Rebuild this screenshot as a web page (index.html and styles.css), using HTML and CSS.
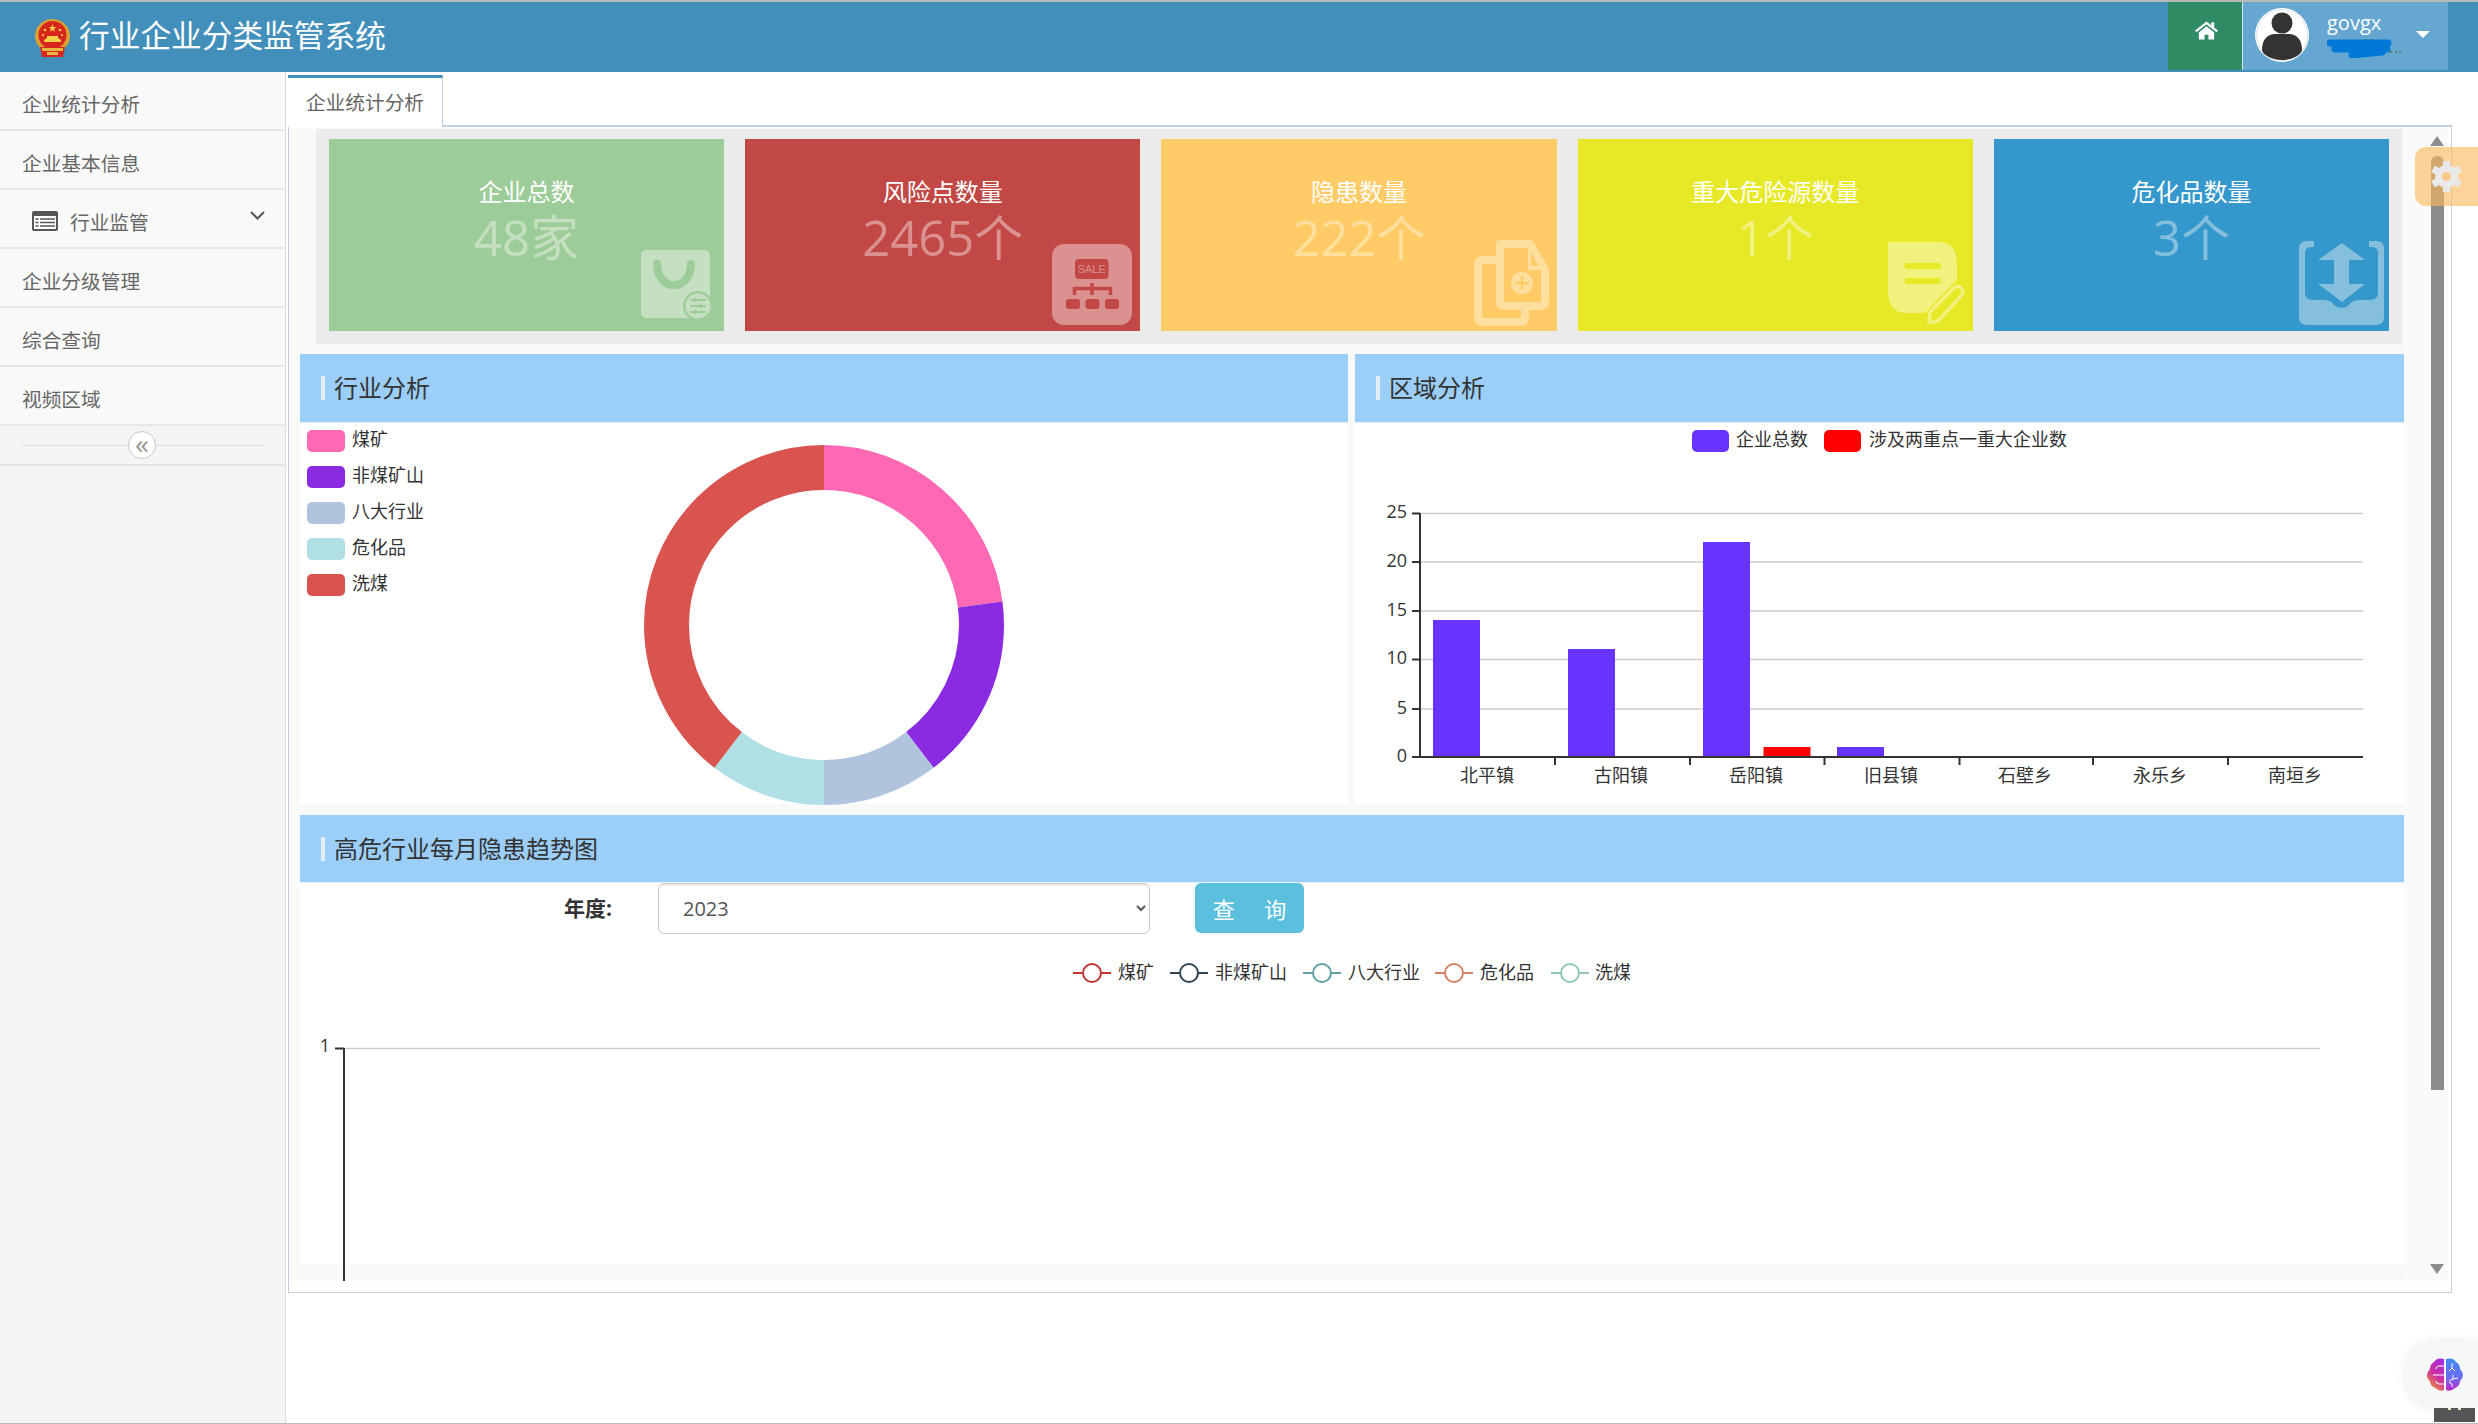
FILE: index.html
```html
<!DOCTYPE html>
<html lang="zh-CN">
<head>
<meta charset="utf-8">
<title>行业企业分类监管系统</title>
<link rel="stylesheet" href="styles.css">
</head>
<body>
<div class="shell">
  <header class="topbar">
    <svg class="emblem" viewBox="0 0 35 38">
      <ellipse cx="17.5" cy="17" rx="17.5" ry="17" fill="#d9a233"/>
      <ellipse cx="17.5" cy="16" rx="14" ry="14" fill="#d8261c"/>
      <path d="M17.5 5l1 3h3l-2.500 1.800 1 3-2.500-1.800-2.500 1.800 1-3L13.500 8h3z" fill="#f6d24a"/>
      <circle cx="10" cy="11" r="1.300" fill="#f6d24a"/><circle cx="25" cy="11" r="1.300" fill="#f6d24a"/>
      <circle cx="8" cy="16" r="1.100" fill="#f6d24a"/><circle cx="27" cy="16" r="1.100" fill="#f6d24a"/>
      <path d="M9 23h17v-2l-3-2v-2H12v2l-3 2z" fill="#f6d24a"/>
      <path d="M5 28h25l-2 10H7z" fill="#d8261c"/>
      <path d="M7 29h21v3H7zM12 33h11v3H12z" fill="#e8b93c"/>
    </svg>
    <h1 class="app-title">行业企业分类监管系统</h1>
    <div class="topbar-spacer"></div>
    <div class="home-btn">
      <svg class="home-icon" viewBox="0 0 24 19">
        <path d="M12 0L0 9.500l1.600 1.800L12 3l10.400 8.300L24 9.500l-4-3.200V1h-3v2.900z" fill="#fff"/>
        <path d="M4 11.500L12 5l8 6.500V19h-6v-5h-4v5H4z" fill="#fff"/>
      </svg>
    </div>
    <div class="user-box">
      <svg class="avatar" viewBox="0 0 54 54">
        <circle cx="27" cy="27" r="27" fill="#fff"/>
        <circle cx="27" cy="27" r="25.500" fill="none" stroke="#dfe3ea"/>
        <circle cx="27" cy="15" r="10.500" fill="#333"/>
        <path d="M7 42c0-11 6-16 13-16h14c7 0 13 5 13 16 0 4-9 10-20 10S7 46 7 42z" fill="#333"/>
      </svg>
      <div class="user-text">
        <div class="user-name">govgx</div>
        <div class="user-org">
          <svg class="scribble" viewBox="0 0 74 20">
            <path d="M3 3h14v8h20V2h10v5h17" fill="none" stroke="#5f7048" stroke-width="1"/>
            <circle cx="69" cy="14" r="1" fill="#5f7048"/><circle cx="64" cy="14" r="1" fill="#5f7048"/><circle cx="73" cy="14" r="1" fill="#5f7048"/>
            <path d="M3 5h58M8 11h52M25 17l30-3" fill="none" stroke="#0078d7" stroke-width="7" stroke-linecap="round"/>
          </svg>
        </div>
      </div>
      <span class="caret"></span>
    </div>
  </header>

  <div class="body-row">
    <nav class="sidebar">
      <a class="nav-item">企业统计分析</a>
      <a class="nav-item">企业基本信息</a>
      <a class="nav-item nav-group">
        <svg class="nav-icon" viewBox="0 0 26 20">
          <rect width="26" height="20" rx="2" fill="#555"/>
          <rect x="2" y="5" width="22" height="13" fill="#fff"/>
          <path d="M3.500 8h3M8 8h15M3.500 11.500h3M8 11.500h15M3.500 15h3M8 15h15" stroke="#555" stroke-width="1.600"/>
        </svg>
        <span>行业监管</span>
        <svg class="nav-chevron" viewBox="0 0 15 9"><path d="M1 1l6.500 6.500L14 1" fill="none" stroke="#555" stroke-width="2"/></svg>
      </a>
      <a class="nav-item">企业分级管理</a>
      <a class="nav-item">综合查询</a>
      <a class="nav-item">视频区域</a>
      <div class="collapse-row">
        <span class="collapse-line"></span>
        <span class="collapse-btn">«</span>
      </div>
    </nav>

    <main class="main">
      <div class="tabs"><div class="tab">企业统计分析</div></div>
      <div class="panel">
        <div class="panel-inner">
          <div class="content">
            <section class="stats">
              <div class="card card-green">
                <div class="card-title">企业总数</div>
                <div class="card-value">48家</div>
                <svg class="card-icon icon-bag" viewBox="0 0 72 71">
                  <rect width="69" height="68" rx="5" class="fg"/>
                  <path d="M16 14c0 28 34 28 34 0" fill="none" stroke-width="8" stroke-linecap="round" class="bg-stroke"/>
                  <circle cx="57" cy="56" r="15" class="bg"/>
                  <circle cx="57" cy="56" r="12.500" class="fg"/>
                  <path d="M49 50h16M49 56h16M49 62h16M54 48v4M60 54v4M54 60v4" stroke-width="2" class="bg-stroke"/>
                </svg>
              </div>
              <div class="card card-red">
                <div class="card-title">风险点数量</div>
                <div class="card-value">2465个</div>
                <svg class="card-icon icon-sale" viewBox="0 0 80 81">
                  <rect width="80" height="81" rx="12" class="fg"/>
                  <rect x="23" y="15" width="33.500" height="20" rx="4" class="bg"/>
                  <text x="39.700" y="29" class="sale-text">SALE</text>
                  <path d="M40 39v12M22.500 51v-6.500h36V51" fill="none" stroke-width="3.500" class="bg-stroke"/>
                  <rect x="14" y="55" width="14" height="10" rx="3" class="bg"/>
                  <rect x="33.500" y="55" width="14" height="10" rx="3" class="bg"/>
                  <rect x="53" y="55" width="14" height="10" rx="3" class="bg"/>
                </svg>
              </div>
              <div class="card card-amber">
                <div class="card-title">隐患数量</div>
                <div class="card-value">222个</div>
                <svg class="card-icon icon-file" viewBox="0 0 75 86">
                  <path d="M22 20H9q-5 0-5 5v52q0 5 5 5h37q5 0 5-5v-8" fill="none" stroke-width="8" class="fg-stroke"/>
                  <path d="M26 4h30l15 26v32q0 4-4 4H30q-4 0-4-4z" stroke-width="8" stroke-linejoin="round" class="bg fg-stroke"/>
                  <path d="M54 4l17 26H54z" class="fg"/>
                  <path d="M57 12l7 14h-7z" class="bg"/>
                  <circle cx="48" cy="43" r="11" class="fg"/>
                  <path d="M41 43h14M48 36v14" stroke-width="2.500" class="bg-stroke"/>
                </svg>
              </div>
              <div class="card card-lime">
                <div class="card-title">重大危险源数量</div>
                <div class="card-value">1个</div>
                <svg class="card-icon icon-note" viewBox="0 0 78 82">
                  <path d="M0 0h50q19 0 19 22v16L37 71H18Q0 71 0 48z" class="fg"/>
                  <rect x="16.500" y="21" width="36.500" height="6" rx="3" class="bg"/>
                  <rect x="16.500" y="36" width="36.500" height="6" rx="3" class="bg"/>
                  <path d="M41 81l1-11 25-25q4-2 7 2 2 4-1 7L50 79z" fill="none" stroke-width="3.500" class="fg-stroke"/>
                </svg>
              </div>
              <div class="card card-blue">
                <div class="card-title">危化品数量</div>
                <div class="card-value">3个</div>
                <svg class="card-icon icon-tray" viewBox="0 0 85 84">
                  <path d="M8 0h7v6h-3q-6 0-6 6v40q0 7 8 7h11q7 0 10 5 8 6 15 0 3-5 10-5h11q8 0 8-7V12q0-6-6-6h-3V0h7q8 0 8 8v68q0 8-8 8H8q-8 0-8-8V8q0-8 8-8z" class="fg"/>
                  <path d="M43 2l23 17H50v24h16L43 61 19 43h16V19H19z" class="fg"/>
                </svg>
              </div>
            </section>

            <div class="analysis-row">
              <section class="block block-left">
                <h2 class="block-head"><span class="block-bar"></span>行业分析</h2>
                <svg class="chart chart-left" viewBox="300 423 1048 381">
                  <rect x="307" y="430" width="38" height="22" rx="5" fill="#ff69b4"/><text x="352" y="446" class="t">煤矿</text>
                  <rect x="307" y="466" width="38" height="22" rx="5" fill="#8a2be2"/><text x="352" y="482" class="t">非煤矿山</text>
                  <rect x="307" y="502" width="38" height="22" rx="5" fill="#b0c4de"/><text x="352" y="518" class="t">八大行业</text>
                  <rect x="307" y="538" width="38" height="22" rx="5" fill="#b0e0e6"/><text x="352" y="554" class="t">危化品</text>
                  <rect x="307" y="574" width="38" height="22" rx="5" fill="#d9534f"/><text x="352" y="590" class="t">洗煤</text>
                  <g transform="rotate(-90 824 625)" fill="none" stroke-width="45">
                    <circle cx="824" cy="625" r="157.500" pathLength="360" stroke="#ff69b4" stroke-dasharray="82.500 277.500" stroke-dashoffset="0"/>
                    <circle cx="824" cy="625" r="157.500" pathLength="360" stroke="#8a2be2" stroke-dasharray="60 300" stroke-dashoffset="-82.500"/>
                    <circle cx="824" cy="625" r="157.500" pathLength="360" stroke="#b0c4de" stroke-dasharray="37.500 322.500" stroke-dashoffset="-142.500"/>
                    <circle cx="824" cy="625" r="157.500" pathLength="360" stroke="#b0e0e6" stroke-dasharray="37.500 322.500" stroke-dashoffset="-180"/>
                    <circle cx="824" cy="625" r="157.500" pathLength="360" stroke="#d9534f" stroke-dasharray="142.500 217.500" stroke-dashoffset="-217.500"/>
                  </g>
                </svg>
              </section>
              <section class="block block-right">
                <h2 class="block-head"><span class="block-bar"></span>区域分析</h2>
                <svg class="chart chart-right" viewBox="1355 423 1049 381">
                  <rect x="1692" y="430" width="37" height="22" rx="5" fill="#6633ff"/><text x="1736" y="446" class="t">企业总数</text>
                  <rect x="1824" y="430" width="37" height="22" rx="5" fill="#ff0000"/><text x="1869" y="446" class="t">涉及两重点一重大企业数</text>
                  <path class="grid" d="M1420 513.500H2363M1420 562H2363M1420 611H2363M1420 659.500H2363M1420 709H2363"/>
                  <g fill="#6633ff">
                    <rect x="1433" y="620" width="47" height="137"/>
                    <rect x="1568" y="649" width="47" height="108"/>
                    <rect x="1703" y="542" width="47" height="215"/>
                    <rect x="1837" y="747" width="47" height="10"/>
                  </g>
                  <rect x="1763.500" y="747" width="47" height="10" fill="#ff0000"/>
                  <path class="axis" d="M1420 513V757M1412 513.500h8M1412 562h8M1412 611h8M1412 659.500h8M1412 709h8M1412 757H2363M1555 757v8M1690 757v8M1824.500 757v8M1959.500 757v8M2093 757v8M2228 757v8"/>
                  <g class="t t-end">
                    <text x="1407" y="518">25</text><text x="1407" y="567">20</text><text x="1407" y="616">15</text><text x="1407" y="664">10</text><text x="1407" y="714">5</text><text x="1407" y="762">0</text>
                  </g>
                  <g class="t t-mid">
                    <text x="1487" y="782">北平镇</text><text x="1621" y="782">古阳镇</text><text x="1756" y="782">岳阳镇</text><text x="1891" y="782">旧县镇</text><text x="2025" y="782">石壁乡</text><text x="2160" y="782">永乐乡</text><text x="2295" y="782">南垣乡</text>
                  </g>
                </svg>
              </section>
            </div>

            <section class="block block-wide">
              <h2 class="block-head"><span class="block-bar"></span>高危行业每月隐患趋势图</h2>
              <form class="query">
                <label class="query-label">年度:</label>
                <select class="query-select"><option>2023</option></select>
                <button type="button" class="query-btn">查&nbsp;&nbsp;询</button>
              </form>
              <svg class="chart chart-trend" viewBox="300 934 2104 331">
                <g fill="#fff" stroke-width="2">
                  <path d="M1073 972h38" stroke="#c23531"/><circle cx="1092" cy="972" r="9" stroke="#c23531"/>
                  <path d="M1170 972h38" stroke="#2f4554"/><circle cx="1189" cy="972" r="9" stroke="#2f4554"/>
                  <path d="M1303 972h38" stroke="#61a0a8"/><circle cx="1322" cy="972" r="9" stroke="#61a0a8"/>
                  <path d="M1435 972h38" stroke="#d48265"/><circle cx="1454" cy="972" r="9" stroke="#d48265"/>
                  <path d="M1551 972h38" stroke="#91c7ae"/><circle cx="1570" cy="972" r="9" stroke="#91c7ae"/>
                </g>
                <g class="t">
                  <text x="1118" y="978">煤矿</text><text x="1215" y="978">非煤矿山</text><text x="1348" y="978">八大行业</text><text x="1480" y="978">危化品</text><text x="1595" y="978">洗煤</text>
                </g>
                <path class="grid" d="M344 1047.500H2320"/>
                <path class="axis" d="M344 1047V1281M335 1047.500h9"/>
                <text x="330" y="1051" class="t t-end">1</text>
              </svg>
            </section>
          </div>
          <div class="scrollbar">
            <span class="arrow-up"></span>
            <span class="thumb"></span>
            <span class="arrow-down"></span>
          </div>
        </div>
      </div>
    </main>
  </div>
</div>

<aside class="gear-tab">
  <svg class="gear" viewBox="0 0 36 36">
    <g stroke="#e9e9e9" stroke-width="8">
      <path d="M18 1v34M3.300 9.500l29.400 17M3.300 26.500l29.400-17"/>
    </g>
    <circle cx="18" cy="18" r="12.500" fill="#e9e9e9"/>
    <circle cx="18" cy="18" r="5" fill="#f9c98a"/>
  </svg>
</aside>
<aside class="brain-tab">
  <svg class="brain" viewBox="0 0 36 33">
    <defs>
      <linearGradient id="lobeL" x1="0.800" y1="0" x2="0.300" y2="1"><stop offset="0" stop-color="#a52be0"/><stop offset="0.550" stop-color="#d0329e"/><stop offset="1" stop-color="#f0962c"/></linearGradient>
      <linearGradient id="lobeR" x1="0.500" y1="0" x2="0.500" y2="1"><stop offset="0" stop-color="#3f8cf5"/><stop offset="0.600" stop-color="#6a6cf0"/><stop offset="1" stop-color="#c026c8"/></linearGradient>
    </defs>
    <path d="M17 1Q10-1 7 4 3 6 3 11 0 14 0 17q0 4 3 6 0 5 5 7 5 4 9 2z" fill="url(#lobeL)"/>
    <path d="M19 1q7-2 10 3 4 2 4 7 3 3 3 6t-3 6q0 5-5 7-5 4-9 2z" fill="url(#lobeR)"/>
    <path d="M17 8h-5q-3 0-3 3M17 17H6M17 26h-5q-3 0-3-3M25 5v5l-3 3M25 10l3 3M26 17v4l-4 2M26 21l5-1M25 26l-3-2M25 26v3" fill="none" stroke="#fff" stroke-width="1"/>
  </svg>
</aside>
<div class="corner-chip"><span class="chip-dot"></span><span class="chip-dot"></span></div>
</body>
</html>
```

FILE: styles.css
```css
* { box-sizing: border-box; }
html, body { margin: 0; height: 100%; }
body {
  width: 2478px;
  height: 1424px;
  overflow: hidden;
  position: relative;
  background: #fff;
  font-family: "Open Sans", "Noto Sans CJK SC", sans-serif;
  color: #333;
}
.shell {
  height: 1424px;
  display: flex;
  flex-direction: column;
  border-top: 2px solid #b8b8b8;
  border-bottom: 1px solid #bdbdbd;
}

/* top bar */
.topbar {
  height: 70px;
  flex: none;
  display: flex;
  align-items: flex-start;
  background: #428fbb;
  padding-left: 35px;
  padding-right: 30px;
}
.emblem { width: 35px; height: 38px; margin-top: 17px; flex: none; }
.app-title {
  margin: 13px 0 0 9px;
  font-size: 30.700px;
  line-height: 40px;
  font-weight: 400;
  color: #fff;
  white-space: nowrap;
}
.topbar-spacer { flex: 1; }
.home-btn {
  width: 75px;
  height: 68px;
  background: #2e8b63;
  border-right: 1px solid #d5e6ef;
  display: flex;
  justify-content: center;
  padding-top: 19px;
  flex: none;
}
.home-icon { width: 23px; height: 19px; margin-left: 2px; }
.user-box {
  width: 205px;
  height: 68px;
  background: #65a7d1;
  display: flex;
  align-items: flex-start;
  padding-left: 12px;
  flex: none;
}
.avatar { width: 54px; height: 54px; margin-top: 6px; flex: none; }
.user-text { margin-left: 18px; width: 77px; flex: none; }
.user-name { font-size: 20px; line-height: 26px; margin-top: 8px; color: #fff; }
.user-org { height: 22px; margin-top: 2px; }
.scribble { width: 74px; height: 20px; display: block; }
.caret {
  width: 0;
  height: 0;
  margin-left: 12px;
  margin-top: 29px;
  border-left: 7px solid transparent;
  border-right: 7px solid transparent;
  border-top: 7px solid #fff;
}

.body-row { flex: 1; display: flex; min-height: 0; }

/* sidebar */
.sidebar {
  width: 286px;
  flex: none;
  background: #f4f4f4;
  border-right: 1px solid #dcdcdc;
  display: flex;
  flex-direction: column;
}
.nav-item {
  height: 59px;
  flex: none;
  display: flex;
  align-items: center;
  padding-left: 22px;
  padding-top: 5px;
  font-size: 19.700px;
  color: #666;
  background: #f9f9f9;
  border-bottom: 2px solid #e8e8e8;
  white-space: nowrap;
}
.nav-group { padding-left: 32px; }
.nav-icon { width: 26px; height: 20px; margin-right: 12px; flex: none; }
.nav-chevron { width: 15px; height: 9px; margin-left: 101px; margin-top: -11px; }
.collapse-row {
  height: 40px;
  flex: none;
  position: relative;
  display: flex;
  align-items: center;
  justify-content: center;
  padding-left: 0;
  border-bottom: 2px solid #e2e2e2;
}
.collapse-line { position: absolute; left: 22px; right: 22px; top: 19px; height: 1px; background: #dcdcdc; }
.collapse-btn {
  position: relative;
  width: 28px;
  height: 28px;
  margin-left: -1px;
  border-radius: 50%;
  border: 1px solid #c8c8c8;
  background: #fff;
  color: #999;
  font-size: 28px;
  line-height: 22px;
  text-align: center;
}

/* main */
.main { flex: 1; min-width: 0; padding: 3px 26px 0 2px; display: flex; flex-direction: column; }
.tabs { height: 50px; flex: none; display: flex; }
.tab {
  position: relative;
  z-index: 1;
  width: 155px;
  height: 52px;
  background: #fff;
  border-top: 3px solid #428fbb;
  border-right: 1px solid #c5d0e0;
  font-size: 19.700px;
  line-height: 50px;
  text-align: center;
  color: #666;
}
.panel {
  height: 1168px;
  flex: none;
  background: #fff;
  border: 1px solid #c5d0e0;
  border-top-width: 2px;
  padding: 1px 2px 11px 0;
}
.panel-inner {
  height: 1153px;
  background: #f9f9f9;
  overflow: hidden;
  display: flex;
}
.content { width: 2115px; flex: none; padding-left: 11px; padding-top: 1px; }

/* stat cards */
.stats {
  margin-left: 16px;
  width: 2086px;
  height: 215px;
  background: #ebebeb;
  padding: 10px 13px 13px;
  display: flex;
  gap: 21px;
}
.card {
  flex: 1;
  position: relative;
  background: var(--bg);
  text-align: center;
  padding-top: 37px;
  color: #fff;
}
.card-title { font-size: 24px; line-height: 32px; }
.card-value {
  font-size: 49px;
  line-height: 50px;
  margin-top: 4px;
  font-weight: 400;
  color: var(--fg);
}
.card-green { --bg: #9ccc97; --fg: #c4e0c0; }
.card-red { --bg: #c24846; --fg: #da9190; }
.card-amber { --bg: #fecb66; --fg: #fedf9e; }
.card-lime { --bg: #e8e926; --fg: #f1f27d; }
.card-blue { --bg: #3498cc; --fg: #85bfde; }
.card-icon { position: absolute; }
.fg { fill: var(--fg); }
.bg { fill: var(--bg); }
.fg-stroke { stroke: var(--fg); }
.bg-stroke { stroke: var(--bg); }
.sale-text { font: 11px "Liberation Sans", sans-serif; fill: var(--fg); text-anchor: middle; }
.icon-bag { width: 72px; height: 71px; right: 11px; bottom: 10px; }
.icon-sale { width: 80px; height: 81px; right: 8px; bottom: 6px; }
.icon-file { width: 75px; height: 86px; right: 8px; bottom: 5px; }
.icon-note { width: 78px; height: 82px; right: 7px; bottom: 7px; }
.icon-tray { width: 85px; height: 84px; right: 5px; bottom: 6px; }

/* blocks */
.analysis-row { display: flex; gap: 7px; margin-top: 10px; }
.block { background: #fff; }
.block-left { width: 1048px; flex: none; }
.block-right { width: 1049px; flex: none; }
.block-wide { margin-top: 11px; height: 450px; width: 2104px; }
.block-head {
  margin: 0;
  height: 69px;
  display: flex;
  align-items: center;
  gap: 9px;
  padding-left: 21px;
  padding-bottom: 3px;
  background: #9bcffa;
  border-bottom: 1px solid #e6f1fb;
  font-size: 24px;
  font-weight: 400;
  color: #333;
}
.block-wide .block-head { height: 68px; }
.block-bar { width: 4px; height: 24px; margin-top: 3px; background: #e4edf5; flex: none; }
.chart { display: block; overflow: visible; }
.chart-left { width: 1048px; height: 381px; }
.chart-right { width: 1049px; height: 381px; }
.chart-trend { width: 2104px; height: 331px; }
.t { font-size: 18px; fill: #333; font-family: "Open Sans", "Noto Sans CJK SC", sans-serif; }
.t-end { text-anchor: end; }
.t-mid { text-anchor: middle; }
.grid { stroke: #ccc; stroke-width: 1.500; fill: none; }
.axis { stroke: #333; stroke-width: 2; fill: none; }

/* query form */
.query { display: flex; align-items: flex-start; height: 52px; padding-left: 264px; }
.query-label {
  width: 49px;
  margin-top: 9px;
  font-size: 21px;
  line-height: 32px;
  font-weight: 700;
  white-space: nowrap;
  color: #333;
}
.query-select {
  width: 492px;
  height: 51px;
  margin-left: 45px;
  padding-left: 20px;
  background: #fff;
  border: 1px solid #ccc;
  border-radius: 6px;
  box-shadow: inset 0 2px 2px rgba(0, 0, 0, .075);
  font-family: "Open Sans", sans-serif;
  font-size: 20px;
  color: #555;
}
.query-btn {
  width: 109px;
  height: 50px;
  margin-left: 45px;
  background: #5bc0de;
  border: 0;
  border-radius: 6px;
  color: #fff;
  font-family: "Open Sans", "Noto Sans CJK SC", sans-serif;
  font-size: 22px;
  word-spacing: 9px;
  padding: 0;
}

/* scrollbar */
.scrollbar {
  flex: 1;
  display: flex;
  flex-direction: column;
  align-items: flex-start;
  padding: 8px 0 7px 26px;
  background: #fafafa;
}
.arrow-up, .arrow-down { width: 0; height: 0; border-left: 7.500px solid transparent; border-right: 7.500px solid transparent; }
.arrow-up { border-bottom: 10px solid #8c8c8c; }
.arrow-down { border-top: 10px solid #8c8c8c; margin-top: auto; }
.thumb { width: 13px; height: 934px; margin: 10px 0 0 1px; background: #8c8c8c; border-radius: 6px 6px 0 0; }

/* floating widgets */
.gear-tab {
  position: absolute;
  left: 2415px;
  top: 147px;
  width: 63px;
  height: 59px;
  border-radius: 11px 0 0 11px;
  background: rgba(254, 184, 92, .62);
}
.gear { position: absolute; left: 15px; top: 13px; width: 33px; height: 33px; }
.brain-tab {
  position: absolute;
  left: 2406px;
  top: 1342px;
  width: 72px;
  height: 65px;
  border-radius: 30px 0 0 30px;
  background: #f7f7f7;
  box-shadow: 0 0 12px rgba(0, 0, 0, .1);
}
.brain { position: absolute; left: 21px; top: 16px; width: 36px; height: 33px; }
.corner-chip {
  position: absolute;
  left: 2434px;
  top: 1408px;
  width: 41px;
  height: 14px;
  background: #555;
  display: flex;
  gap: 7px;
  padding-left: 14px;
}
.chip-dot { width: 3px; height: 2px; background: #f2e6c8; }
```
